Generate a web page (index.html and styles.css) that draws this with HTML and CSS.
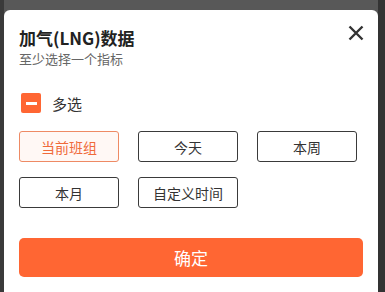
FILE: index.html
```html
<!DOCTYPE html>
<html lang="zh-CN">
<head>
<meta charset="utf-8">
<title>加气(LNG)数据</title>
<link rel="stylesheet" href="styles.css">
</head>
<body>
<div class="sheet">
  <div class="header">
    <div class="titles">
      <div class="title">加气(LNG)数据</div>
      <div class="subtitle">至少选择一个指标</div>
    </div>
    <div class="close" aria-label="关闭">
      <svg width="16" height="16" viewBox="0 0 16 16"><path d="M1.5 1.5 L14.5 14.5 M14.5 1.5 L1.5 14.5" stroke="#333" stroke-width="2.4" stroke-linecap="butt" fill="none"/></svg>
    </div>
  </div>
  <div class="check-row">
    <span class="checkbox"><span class="bar"></span></span>
    <span class="check-label">多选</span>
  </div>
  <div class="options">
    <div class="opt active">当前班组</div>
    <div class="opt">今天</div>
    <div class="opt">本周</div>
    <div class="opt">本月</div>
    <div class="opt">自定义时间</div>
  </div>
  <div class="confirm">确定</div>
</div>
</body>
</html>
```
FILE: styles.css
```css
html, body {
  margin: 0;
  padding: 0;
}
body {
  width: 385px;
  height: 292px;
  overflow: hidden;
  background: linear-gradient(to right, #3a3a3a 0, #3a3a3a 4px, #585858 4px, #585858 378px, #333 378px);
  font-family: "Noto Sans CJK SC", "Noto Sans", sans-serif;
  padding-top: 10px;
  box-sizing: border-box;
}
.sheet {
  margin-left: 4px;
  width: 374px;
  height: 290px;
  background: #fff;
  border-radius: 6px 6px 0 0;
  padding: 17px 14px 0 15px;
  box-sizing: border-box;
}
.header {
  display: flex;
  justify-content: space-between;
  align-items: flex-start;
}
.title {
  font-size: 17px;
  line-height: 22px;
  font-weight: bold;
  color: #222;
}
.subtitle {
  font-size: 13px;
  line-height: 17px;
  color: #666;
  margin-top: 1px;
}
.close {
  width: 16px;
  height: 16px;
  margin-top: -2px;
}
.close svg { display: block; }
.check-row {
  display: flex;
  align-items: center;
  margin-top: 26px;
  padding-left: 2px;
  height: 20px;
}
.checkbox {
  width: 20px;
  height: 20px;
  background: #ff6633;
  border-radius: 2px;
  display: flex;
  align-items: center;
  justify-content: center;
}
.bar {
  width: 11px;
  height: 3px;
  background: #fff;
}
.check-label {
  margin-left: 11px;
  font-size: 15px;
  color: #333;
}
.options {
  display: grid;
  grid-template-columns: repeat(3, 100px);
  column-gap: 19px;
  row-gap: 15px;
  margin-top: 18px;
}
.opt {
  height: 31px;
  box-sizing: border-box;
  border: 1px solid #3a3a3a;
  border-radius: 3px;
  display: flex;
  align-items: center;
  justify-content: center;
  font-size: 14px;
  color: #333;
}
.opt.active {
  border-color: #ee8a64;
  background: #fff8f5;
  color: #f06a3a;
}
.confirm {
  margin-top: 30px;
  width: 344px;
  height: 39px;
  background: #ff6633;
  border-radius: 5px;
  color: #fff;
  font-size: 17px;
  display: flex;
  align-items: center;
  justify-content: center;
}
```
